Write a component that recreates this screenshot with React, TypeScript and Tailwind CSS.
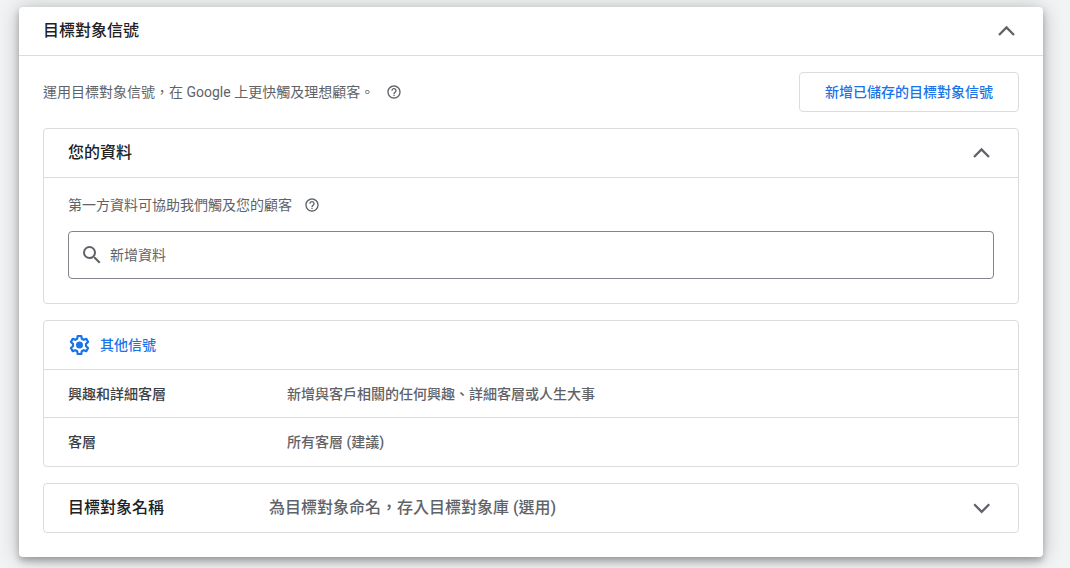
import { useState } from 'react';
import { MdSearch, MdHelpOutline } from 'react-icons/md';

const rows = [
  { label: '興趣和詳細客層', value: '新增與客戶相關的任何興趣、詳細客層或人生大事' },
  { label: '客層', value: '所有客層 (建議)' },
];

function Chevron({ open }: { open: boolean }) {
  return (
    <svg width="26" height="26" viewBox="0 0 26 26" fill="none" stroke="currentColor" strokeWidth="2.3">
      <path d={open ? 'M6 17 L13.5 9.5 L21 17' : 'M6.2 9.3 L13.7 16.8 L21.2 9.3'} />
    </svg>
  );
}

function GearIcon() {
  return (
    <svg width="24" height="24" viewBox="0 0 24 24" fill="none" stroke="currentColor" strokeWidth="2.2" strokeLinejoin="round">
      <path d="M9.7 3h3.6l.5 2.7 1.9 1.1 2.6-.9 1.8 3.1-2.1 1.8v2.4l2.1 1.8-1.8 3.1-2.6-.9-1.9 1.1-.5 2.7H9.7l-.5-2.7-1.9-1.1-2.6.9-1.8-3.1L5 13.2v-2.4L2.9 9l1.8-3.1 2.6.9 1.9-1.1z" />
      <circle cx="11.5" cy="12" r="3.5" fill="currentColor" stroke="none" />
    </svg>
  );
}

export default function App() {
  const [query, setQuery] = useState('');

  return (
    <div className="min-h-screen bg-[#f1f3f4] pt-[7px] pr-[27px] pb-[11px] pl-[19px] font-[Roboto,'Noto_Sans_CJK_TC',sans-serif] text-sm text-[#5f6368]">
      <section className="rounded bg-white shadow-[0_4px_6px_0_rgba(0,0,0,0.24),0_2px_20px_0_rgba(0,0,0,0.26)]">
        <header className="flex h-[49px] items-center justify-between border-b border-[#dadce0] px-6">
          <h1 className="text-base font-medium text-[#202124]">目標對象信號</h1>
          <button type="button" aria-label="收合">
            <Chevron open />
          </button>
        </header>

        <div className="flex flex-col gap-4 px-6 pt-4 pb-6">
          <div className="flex h-10 items-center justify-between">
            <p className="flex items-center gap-3">
              運用目標對象信號，在 Google 上更快觸及理想顧客。
              <MdHelpOutline size={16} />
            </p>
            <button type="button" className="h-10 rounded border border-[#dadce0] px-[25px] font-medium text-[#1a73e8]">
              新增已儲存的目標對象信號
            </button>
          </div>

          <section className="rounded border border-[#dadce0]">
            <header className="flex h-[49px] items-center justify-between border-b border-[#dadce0] px-6">
              <h2 className="text-base font-medium text-[#202124]">您的資料</h2>
              <button type="button" aria-label="收合">
                <Chevron open />
              </button>
            </header>
            <div className="px-6 pt-4 pb-6">
              <label htmlFor="data" className="flex h-[21px] items-center gap-3">
                第一方資料可協助我們觸及您的顧客
                <MdHelpOutline size={16} />
              </label>
              <div className="mt-4 flex h-12 items-center gap-1.5 rounded border border-[#80868b] px-[11px]">
                <MdSearch size={24} />
                <input
                  id="data"
                  value={query}
                  onChange={(e) => setQuery(e.target.value)}
                  placeholder="新增資料"
                  className="flex-1 outline-none placeholder:text-[#5f6368]"
                />
              </div>
            </div>
          </section>

          <section className="rounded border border-[#dadce0]">
            <header className="flex h-12 items-center gap-2 px-6 text-[#1a73e8]">
              <GearIcon />
              <h2 className="font-medium">其他信號</h2>
            </header>
            {rows.map((row) => (
              <div key={row.label} className="flex min-h-12 items-center border-t border-[#dadce0] px-6 font-medium last:min-h-[49px]">
                <span className="w-[219px] text-[#3c4043]">{row.label}</span>
                <span>{row.value}</span>
              </div>
            ))}
          </section>

          <section className="flex h-[50px] items-center rounded border border-[#dadce0] px-6 text-base font-medium">
            <h2 className="w-[201px] text-[#202124]">目標對象名稱</h2>
            <span className="flex-1">為目標對象命名，存入目標對象庫 (選用)</span>
            <button type="button" aria-label="展開">
              <Chevron open={false} />
            </button>
          </section>
        </div>
      </section>
    </div>
  );
}
